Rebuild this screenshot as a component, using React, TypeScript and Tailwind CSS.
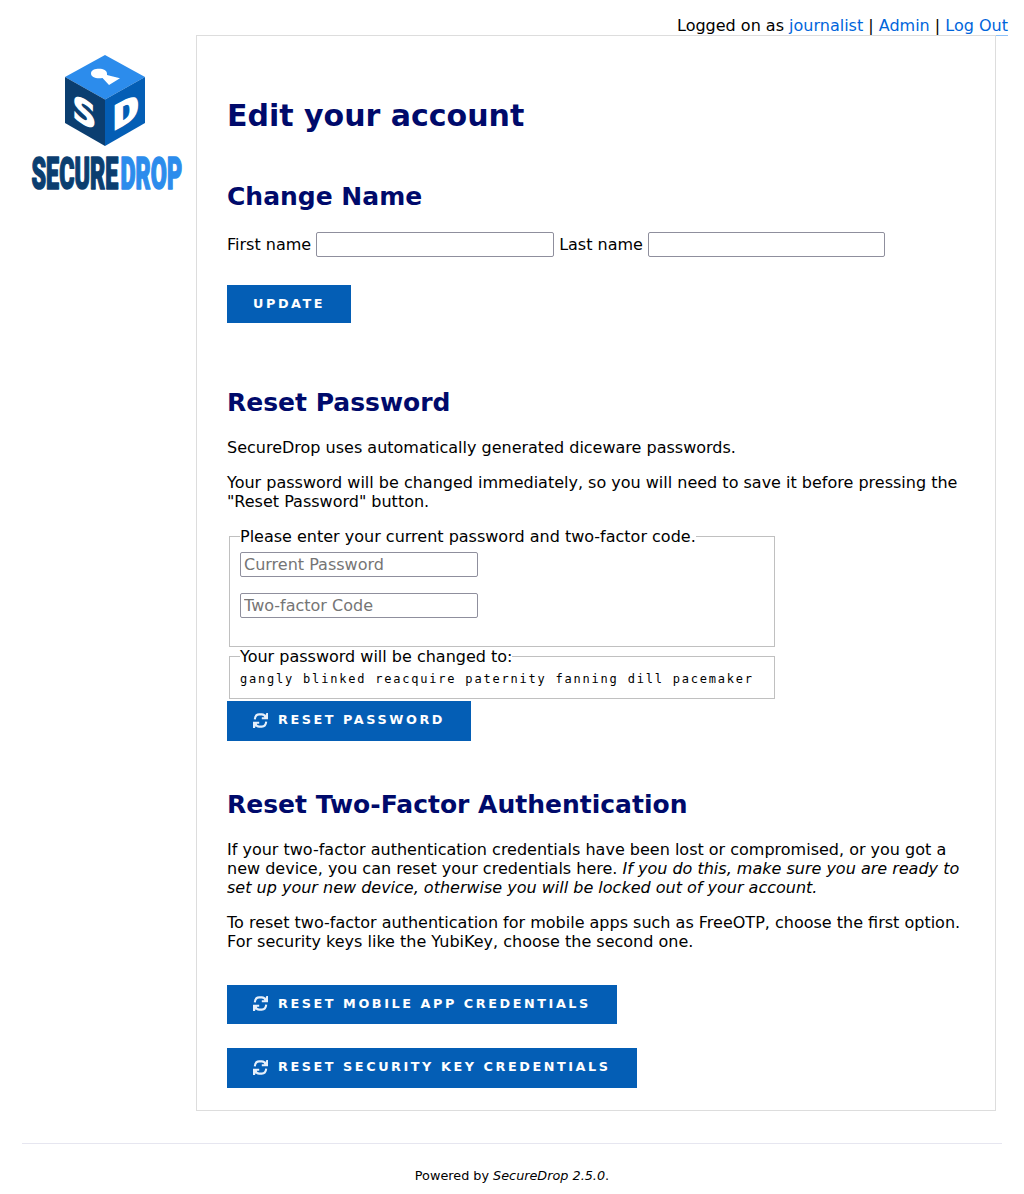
import type { ReactNode } from "react";

function Logo() {
  return (
    <svg className="block h-[140px] w-[154px]" viewBox="30 52 154 140" role="img" aria-label="SecureDrop">
      <polygon points="105,55 145,77 105,99.5 65,77" fill="#2c8cec" />
      <polygon points="65,77 105,99.5 105,146 65,123" fill="#0b3e70" />
      <polygon points="145,77 105,99.5 105,146 145,123" fill="#045eb5" />
      <path d="M91 73.5 C91 70 95 68.8 99 68.8 C103.5 68.8 107 70.5 107 73.8 L107 75 L120 78.2 L109 85 L102.5 78 C96 79 91 77 91 73.5Z" fill="#fff" />
      <g fill="#fff" fontFamily="DejaVu Sans Mono" fontWeight="700" stroke="#fff" strokeWidth="1.5" strokeLinejoin="miter">
        <text transform="matrix(1.16 .65 0 1 72.8 117.5)" fontSize="33">S</text>
        <text transform="matrix(1.32 -.73 0 1 112.8 131)" fontSize="33">D</text>
      </g>
      <g fontFamily="Roboto" fontWeight="900" fontSize="44" strokeWidth="1.6" strokeLinejoin="round">
        <text transform="translate(31.5 189) scale(.53 1)" fill="#0b3e70" stroke="#0b3e70">SECURE</text>
        <text transform="translate(120.5 189) scale(.53 1)" fill="#2c8cec" stroke="#2c8cec">DROP</text>
      </g>
    </svg>
  );
}

function RefreshIcon({ className }: { className: string }) {
  return (
    <svg className={`mr-[10px] h-[15px] w-[15px] shrink-0 ${className}`} viewBox="0 0 15 15" fill="none" stroke="#e6f0fb" strokeWidth="2.1">
      <path d="M1.8 6.3C2.1 3 3.9 1.4 6.2 1.4H8.8C10.8 1.4 12 2.6 12.6 4.4" />
      <path d="M13.2 8.7C12.9 12 11.1 13.6 8.8 13.6H6.2C4.2 13.6 3 12.4 2.4 10.6" />
      <path d="M15 0v6.2H8.8V4.3h2.8L13.4 0Z M0 15V8.8h6.2v1.9H3.9L1.9 15Z" fill="#e6f0fb" stroke="none" />
    </svg>
  );
}

function Button({ className, icon, children }: { className: string; icon?: string; children: ReactNode }) {
  return (
    <button className={`flex items-center bg-[#045eb5] pl-[26px] text-[12.8px] font-bold tracking-[2.56px] whitespace-nowrap text-white uppercase ${className}`}>
      {icon && <RefreshIcon className={icon} />}
      <span>{children}</span>
    </button>
  );
}

const field = "block h-[25px] rounded-[2px] border border-[#8f8f9d] bg-white px-[3px] placeholder:text-[#757575] placeholder:opacity-100";
const heading = "text-[25px] leading-[29px] font-bold text-[#000a6b]";
const link = "border-b border-[#8ec2f8] text-[#0065db]";

export default function App() {
  return (
    <div className="h-[1194px] bg-white pt-4 font-['DejaVu_Sans',sans-serif] text-base leading-[19px] text-black">
      <header className="h-[19px] pr-4 text-right">
        Logged on as <a className={link}>journalist</a> | <a className={link}>Admin</a> | <a className={link}>Log Out</a>
      </header>
      <div className="flex">
        <aside className="w-[196px] shrink-0 pt-[17px] pl-[30px]">
          <Logo />
        </aside>
        <main className="relative h-[1076px] w-[800px] border border-[#dddddd] bg-white px-[30px] pt-[62px]">
          <h1 className="text-[30px] leading-[35px] font-bold text-[#000a6b]">Edit your account</h1>
          <h2 className={`mt-[49px] ${heading}`}>Change Name</h2>
          <div className="mt-[21px] flex h-[25px] items-center whitespace-nowrap">
            <label>First name</label>
            <input className={`ml-[5px] w-[238px] ${field}`} />
            <label className="ml-[5px]">Last name</label>
            <input className={`ml-[5px] w-[237px] ${field}`} />
          </div>
          <Button className="mt-7 h-[38px] w-[124px] pb-[2px]">Update</Button>

          <h2 className={`mt-[65px] ${heading}`}>Reset Password</h2>
          <p className="mt-[21px]">SecureDrop uses automatically generated diceware passwords.</p>
          <p className="mt-4">Your password will be changed immediately, so you will need to save it before pressing the "Reset Password" button.</p>
          <fieldset className="mt-4 ml-[2px] h-[120px] w-[546px] border border-[#c0c0c0] px-[10px]">
            <legend>Please enter your current password and two-factor code.</legend>
            <input className={`mt-[6px] w-[238px] ${field}`} placeholder="Current Password" />
            <input className={`mt-4 w-[238px] ${field}`} placeholder="Two-factor Code" />
          </fieldset>
          <fieldset className="ml-[2px] h-[52px] w-[546px] border border-[#c0c0c0] px-[10px]">
            <legend>Your password will be changed to:</legend>
            <div className="mt-[6px] font-['DejaVu_Sans_Mono',monospace] text-[12px] leading-[14px] tracking-[1.79px] whitespace-nowrap">gangly blinked reacquire paternity fanning dill pacemaker</div>
          </fieldset>
          <Button icon="mt-[2px]" className="mt-[2px] h-10 w-[244px] pb-[3px]">Reset Password</Button>

          <h2 className={`mt-[49px] ${heading}`}>Reset Two-Factor Authentication</h2>
          <p className="mt-[21px]">
            If your two-factor authentication credentials have been lost or compromised, or you got a new device, you can reset your credentials here. <em>If you do this, make sure you are ready to set up your new device, otherwise you will be locked out of your account.</em>
          </p>
          <p className="mt-4">To reset two-factor authentication for mobile apps such as FreeOTP, choose the first option. For security keys like the YubiKey, choose the second one.</p>
          <Button icon="mt-0" className="mt-[34px] h-[39px] w-[390px] pb-[2px]">Reset Mobile App Credentials</Button>
          <Button icon="mt-[2px]" className="mt-6 h-10 w-[410px] pb-[3px]">Reset Security Key Credentials</Button>
        </main>
      </div>
      <footer className="mx-[22px] mt-8 border-t border-[#e6e6f0] pt-6 text-center text-[12.8px] leading-[15px]">
        Powered by <em>SecureDrop 2.5.0</em>.
      </footer>
    </div>
  );
}
